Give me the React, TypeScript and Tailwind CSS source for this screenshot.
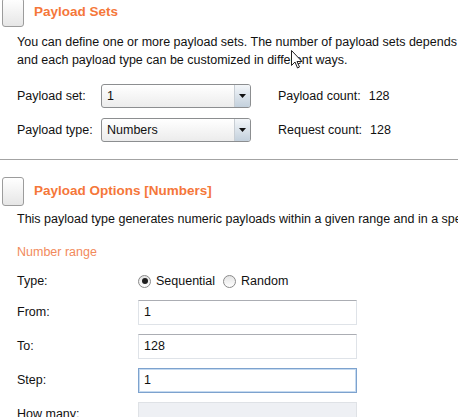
import { ReactNode } from "react";

const ORANGE = "text-[#f5773a]";

const PanelIcon = () => (
  <div className="-ml-[15px] h-[29px] w-[22px] shrink-0 rounded-[3px] border border-[#9c9c9c] bg-gradient-to-b from-white to-[#e6e6e6]" />
);

const Select = ({ value }: { value: string }) => (
  <div className="flex h-[24px] w-[150px] items-stretch overflow-hidden rounded-[3px] border border-[#8c8e90] bg-gradient-to-b from-white to-[#ececec]">
    <div className="flex flex-1 items-center pl-[5px]">{value}</div>
    <div className="flex w-[16px] items-center justify-center border-l border-[#c8ced4] bg-gradient-to-b from-[#f3f6f9] to-[#c3d0dc]">
      <svg width="7" height="4" viewBox="0 0 7 4">
        <path d="M0 0h7L3.5 4z" fill="#111" />
      </svg>
    </div>
  </div>
);

const Radio = ({ checked, label }: { checked?: boolean; label: string }) => (
  <div className="flex items-center gap-[5px]">
    <div className="flex h-[13px] w-[13px] items-center justify-center rounded-full border border-[#8a8a8a] bg-gradient-to-b from-[#e4e4e4] to-white">
      {checked && <div className="h-[6px] w-[6px] rounded-full bg-[#1f1f1f]" />}
    </div>
    <span>{label}</span>
  </div>
);

const Field = ({ value, focused, disabled }: { value?: string; focused?: boolean; disabled?: boolean }) => (
  <div
    className={
      focused
        ? "flex h-[25px] w-[219px] items-center border border-[#7da2ce] px-[5px] shadow-[inset_0_0_0_1px_#c5daf0]"
        : disabled
          ? "flex h-[25px] w-[219px] items-center border border-[#dfe2e6] bg-[#eef0f4] px-[5px]"
          : "flex h-[25px] w-[219px] items-center border border-[#dfe3e8] border-t-[#abadb3] px-[5px]"
    }
  >
    {value}
  </div>
);

const Row = ({ label, children }: { label: string; children: ReactNode }) => (
  <div className="flex items-center">
    <div className="w-[121px] shrink-0">{label}</div>
    {children}
  </div>
);

export default function App() {
  return (
    <div className="relative h-[417px] w-[458px] overflow-hidden bg-white pl-[17px] font-['Liberation_Sans',Arial,sans-serif] text-[12.5px] text-[#111]">
      {/* Payload Sets */}
      <div className="-mt-[2px] flex h-[29px] items-center gap-[10px]">
        <PanelIcon />
        <h2 className={"text-[13.5px] font-bold " + ORANGE}>Payload Sets</h2>
      </div>
      <p className="mt-[6px] whitespace-nowrap leading-[18px]">
        You can define one or more payload sets. The number of payload sets depends
        <br />
        and each payload type can be customized in different ways.
      </p>
      <div className="mt-[15px] flex flex-col gap-[10px]">
        <div className="flex items-center">
          <div className="w-[84px]">Payload set:</div>
          <Select value="1" />
          <div className="ml-[27px] flex gap-[8px]">
            <span>Payload count:</span>
            <span>128</span>
          </div>
        </div>
        <div className="flex items-center">
          <div className="w-[84px]">Payload type:</div>
          <Select value="Numbers" />
          <div className="ml-[27px] flex gap-[8px]">
            <span>Request count:</span>
            <span>128</span>
          </div>
        </div>
      </div>

      <div className="-ml-[17px] mt-[17px] h-px bg-[#a3a3a3]" />

      {/* Payload Options */}
      <div className="mt-[19px] flex h-[25px] items-center gap-[10px]">
        <PanelIcon />
        <h2 className={"text-[13.5px] font-bold " + ORANGE}>Payload Options [Numbers]</h2>
      </div>
      <p className="mt-[6px] whitespace-nowrap leading-[18px]">
        This payload type generates numeric payloads within a given range and in a specified format.
      </p>
      <div className="mt-[15px] leading-[18px] text-[#f28a5c]">Number range</div>

      <div className="mt-[11px] flex flex-col gap-[9px]">
        <Row label="Type:">
          <div className="flex h-[18px] items-center gap-[8px]">
            <Radio checked label="Sequential" />
            <Radio label="Random" />
          </div>
        </Row>
        <Row label="From:">
          <Field value="1" />
        </Row>
        <Row label="To:">
          <Field value="128" />
        </Row>
        <Row label="Step:">
          <Field value="1" focused />
        </Row>
        <Row label="How many:">
          <Field disabled />
        </Row>
      </div>

      {/* mouse pointer */}
      <svg className="absolute left-[291px] top-[50px]" width="12" height="19" viewBox="0 0 12 19">
        <path d="M0.5 0.5v15l3.5-3.5 2.5 6 2-1-2.5-5.5h5z" fill="#fff" stroke="#222" strokeWidth="1" />
      </svg>
    </div>
  );
}
